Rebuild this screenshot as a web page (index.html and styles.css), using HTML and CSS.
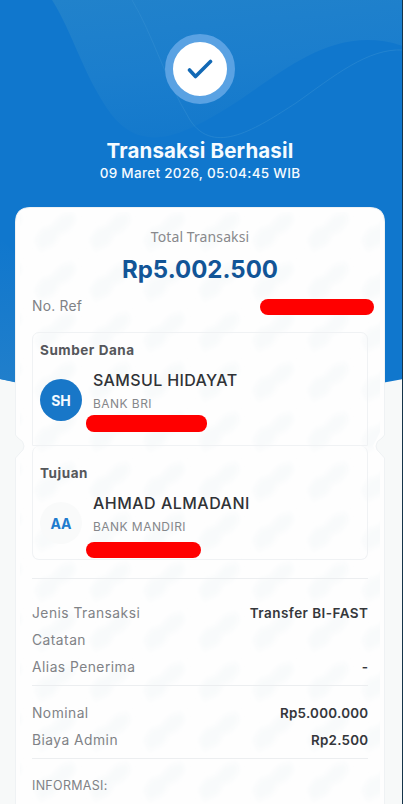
FILE: index.html
```html
<!DOCTYPE html>
<html lang="id">
<head>
<meta charset="utf-8">
<meta name="viewport" content="width=device-width">
<title>Transaksi Berhasil</title>
<link rel="stylesheet" href="styles.css">
</head>
<body>
<main class="screen">
  <svg class="backdrop" viewBox="0 0 403 804" aria-hidden="true">
    <defs>
      <linearGradient id="wave" x1="0" y1="0" x2="0.25" y2="1">
        <stop offset="0" stop-color="#2182cb"/>
        <stop offset="0.55" stop-color="#1b7ecd"/>
        <stop offset="1" stop-color="#1479cc"/>
      </linearGradient>
      <linearGradient id="side" x1="0" y1="0" x2="0" y2="1">
        <stop offset="0" stop-color="#1077cd"/>
        <stop offset="1" stop-color="#217fcb"/>
      </linearGradient>
    </defs>
    <path fill="#1077cd" d="M0 0H403V379Q201 420 0 379Z"/>
    <path fill="url(#wave)" d="M52 0C73 33 83 75 111 114C142 154 181 136 224 110C279 77 330 22 403 46V0Z"/>
    <path fill="url(#side)" d="M0 238Q14 250 32 280V386L0 379Z"/>
    <path fill="none" stroke="#3790d4" stroke-width=".7" opacity=".65" d="M132 0C153 35 164 77 190 120C214 157 257 128 296 103C334 76 368 48 403 50"/>
  </svg>

  <header class="hero">
    <div class="success">
      <svg width="26" height="22" viewBox="0 0 26 22" aria-hidden="true"><path d="M2.5 12L8.5 18.5L23.5 3.5" fill="none" stroke="#1269b5" stroke-width="3.6" stroke-linecap="round" stroke-linejoin="round"/></svg>
    </div>
    <h1>Transaksi Berhasil</h1>
    <p class="date">09 Maret 2026, 05:04:45 WIB</p>
  </header>

  <section class="receipt">
    <svg class="paper" viewBox="0 0 370 620" aria-hidden="true">
      <defs>
        <filter id="soft" x="-30%" y="-30%" width="160%" height="160%"><feGaussianBlur stdDeviation="2.5"/></filter>
        <pattern id="marks" width="54.5" height="50" patternUnits="userSpaceOnUse" patternTransform="translate(14 0)">
          <g filter="url(#soft)" fill="#f8fafb">
            <path d="M6 33L13 22L23 19L31 9L44 5L47 14L38 25L30 27L26 37L11 44Z"/>
          </g>
        </pattern>
      </defs>
      <path class="sheet" d="M15 .5H355Q369.500 .5 369.500 15V228L367 231Q361 234 361 239Q361 243 365 246L369.500 251V620H.5V251L5 246Q9 243 9 239Q9 234 3 231L.5 228V15Q.5 .5 15 .5Z"/>
      <path fill="url(#marks)" d="M5 5H365V225L358 239L365 253V620H5V253L12 239L5 225Z"/>
    </svg>

    <p class="total-label">Total Transaksi</p>
    <p class="total">Rp5.002.500</p>
    <div class="reference"><span>No. Ref</span><i class="redaction ref-mask"></i></div>

    <div class="accounts">
      <section class="account source">
        <h2>Sumber Dana</h2>
        <div class="party">
          <div class="avatar">SH</div>
          <div class="details">
            <p class="name source-name">SAMSUL HIDAYAT</p>
            <p class="bank">BANK BRI</p>
            <i class="redaction"></i>
          </div>
        </div>
      </section>
      <section class="account destination">
        <h2>Tujuan</h2>
        <div class="party">
          <div class="avatar light">AA</div>
          <div class="details">
            <p class="name dest-name">AHMAD ALMADANI</p>
            <p class="bank">BANK MANDIRI</p>
            <i class="redaction"></i>
          </div>
        </div>
      </section>
    </div>

    <dl class="rows info">
      <div><dt>Jenis Transaksi</dt><dd>Transfer BI-FAST</dd></div>
      <div><dt>Catatan</dt><dd></dd></div>
      <div><dt>Alias Penerima</dt><dd>-</dd></div>
    </dl>
    <dl class="rows costs">
      <div><dt>Nominal</dt><dd>Rp5.000.000</dd></div>
      <div><dt>Biaya Admin</dt><dd>Rp2.500</dd></div>
    </dl>
    <p class="notice">INFORMASI:</p>
  </section>
</main>
</body>
</html>
```

FILE: styles.css
```css
* { box-sizing: border-box; }
body, h1, h2, p, dl, dd { margin: 0; }
body {
  background: #f7f9f9;
  color: #303236;
  font-family: Inter, "Liberation Sans", sans-serif;
  overflow: hidden;
}
.screen {
  position: relative;
  isolation: isolate;
  width: 403px;
  height: 804px;
  overflow: hidden;
  border-right: 1px solid #15344a;
}
.backdrop {
  position: absolute;
  z-index: -1;
  left: 0;
  top: 0;
  width: 403px;
  height: 804px;
}
.hero {
  height: 207px;
  padding: 34px 2px 0 0;
  display: flex;
  flex-direction: column;
  align-items: center;
  color: #f5fbff;
  white-space: nowrap;
}
.success {
  width: 70px;
  height: 70px;
  flex: none;
  display: grid;
  place-items: center;
  border: 8px solid #5aa2e3;
  border-radius: 50%;
  background: #fff;
}
h1 {
  margin-top: 33px;
  font-size: 20.5px;
  line-height: 27px;
  font-weight: 700;
  letter-spacing: .15px;
}
.date {
  font-size: 13.5px;
  line-height: 18px;
  font-weight: 500;
  letter-spacing: .3px;
}
.receipt {
  position: relative;
  isolation: isolate;
  width: 370px;
  height: 620px;
  margin-left: 15px;
  padding: 21px 17px 0;
}
.paper {
  position: absolute;
  z-index: -1;
  inset: 0;
  width: 370px;
  height: 620px;
  overflow: visible;
}
.sheet { fill: #fefefe; stroke: #eff2f4; stroke-width: 1; }
.total-label {
  text-align: center;
  color: #88898c;
  font: 14px/18px "Noto Sans", sans-serif;
  letter-spacing: .1px;
}
.total {
  margin-top: 10px;
  text-align: center;
  color: #125597;
  font-size: 24px;
  line-height: 28px;
  font-weight: 700;
}
.reference {
  margin-top: 12px;
  height: 20px;
  display: flex;
  align-items: center;
  justify-content: space-between;
  color: #808286;
  font-size: 13.8px;
  line-height: 20px;
  letter-spacing: .25px;
}
.redaction {
  display: block;
  width: 121px;
  height: 17px;
  border-radius: 8px;
  background: #f00;
}
.ref-mask { width: 114px; height: 16px; margin: 2px -6px 0 0; }
.accounts { margin-top: 16px; }
.account {
  height: 114px;
  padding: 8px 7px 0;
  border: 1px solid #f0f2f4;
  border-radius: 7px;
}
.source { border-bottom-left-radius: 0; border-bottom-right-radius: 0; }
.destination { border-top: 0; padding-top: 18px; }
h2 {
  font-size: 13.5px;
  line-height: 18px;
  font-weight: 700;
  letter-spacing: .55px;
  color: #55575b;
}
.party { display: flex; gap: 11px; }
.avatar {
  width: 42px;
  height: 42px;
  margin-top: 20px;
  flex: none;
  border-radius: 50%;
  display: grid;
  place-items: center;
  background: #1877c8;
  color: #f5fbff;
  font-size: 14px;
  font-weight: 700;
}
.light { color: #207bce; background: #f9fafa; }
.name {
  margin-top: 10px;
  font-size: 16px;
  line-height: 22px;
  font-weight: 500;
  letter-spacing: .36px;
  white-space: nowrap;
}
.dest-name { letter-spacing: .48px; }
.bank {
  margin-top: 4px;
  font-size: 12px;
  line-height: 18px;
  letter-spacing: .45px;
  color: #85878b;
}
.details .redaction { margin: 2px 0 0 -7px; }
.destination .redaction { width: 115px; height: 16px; margin-top: 6px; }
.rows {
  border-top: 1px solid #eceef0;
  font-size: 13.8px;
  line-height: 27px;
  letter-spacing: .48px;
}
.rows > div { display: flex; justify-content: space-between; }
dt { color: #808286; }
dd { margin-right: -.4px; font-size: 13.5px; font-weight: 600; letter-spacing: .45px; color: #35373b; }
.info { height: 107px; margin-top: 18px; padding-top: 21px; }
.costs { height: 74px; padding-top: 14px; border-bottom: 1px solid #eceef0; }
.costs dd { font-size: 13.4px; letter-spacing: .25px; }
.notice {
  margin-top: 17px;
  color: #808286;
  font-size: 12.5px;
  line-height: 20px;
  letter-spacing: .3px;
}
```
